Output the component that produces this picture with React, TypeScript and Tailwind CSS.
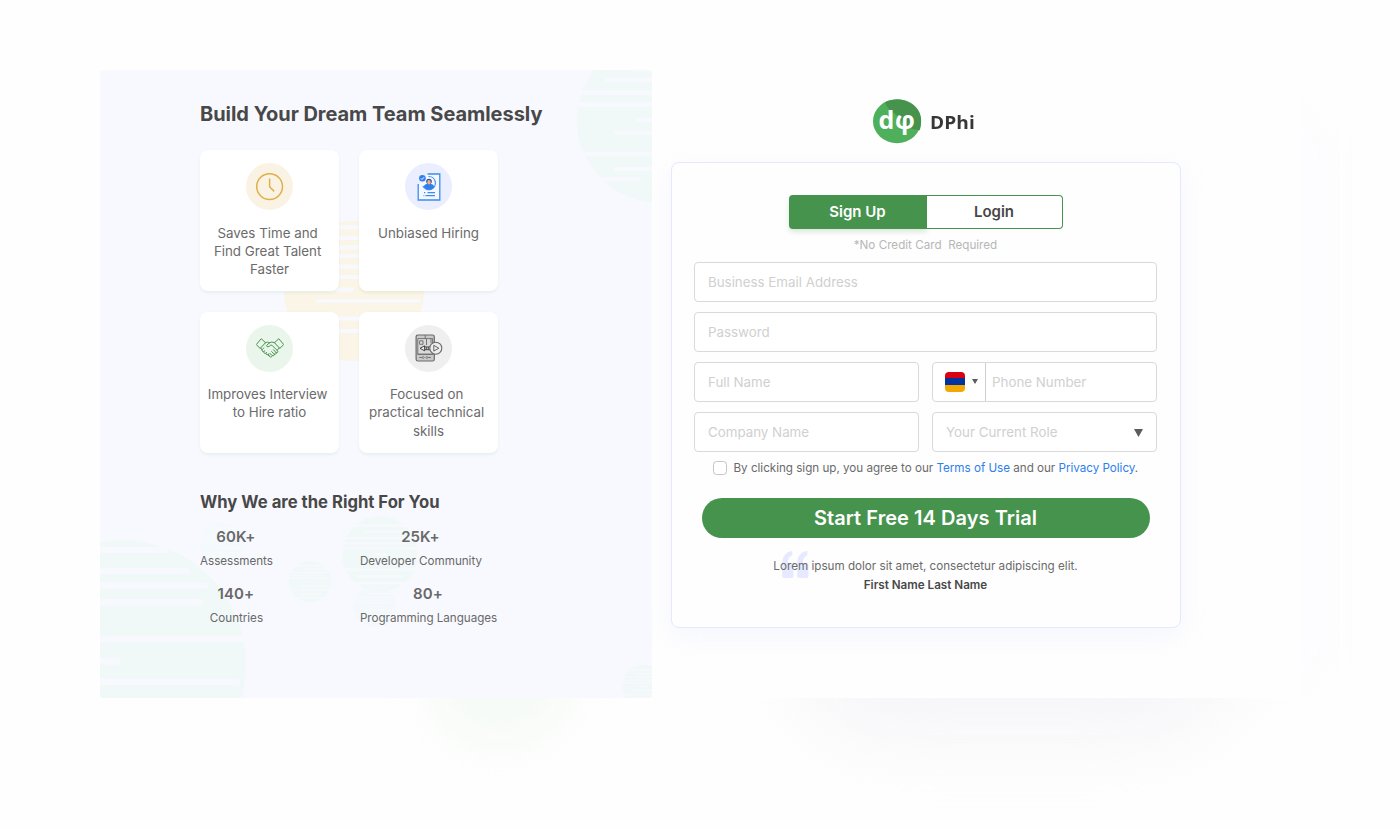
import type { ReactNode } from "react";

type Stripe = { x1: number; x2: number; y: number; h: number };

function StripedCircle({ id, cx, cy, r, fill, stripes }: { id: string; cx: number; cy: number; r: number; fill: string; stripes: Stripe[] }) {
  return (
    <g>
      <mask id={id}>
        <rect x={cx - r} y={cy - r} width={r * 2} height={r * 2} fill="white" />
        {stripes.map((s, i) => (
          <rect key={i} x={s.x1} y={s.y} width={s.x2 - s.x1} height={s.h} rx={s.h / 2} fill="black" />
        ))}
      </mask>
      <circle cx={cx} cy={cy} r={r} fill={fill} mask={`url(#${id})`} />
    </g>
  );
}

const line = (x1: number, x2: number, y: number, h: number): Stripe => ({ x1, x2, y, h });

/* Stripe pattern shared by the small circles, as fractions of the radius. */
const pattern: [number, number, number][] = [
  [-1.1, 1.1, -0.78],
  [-0.4, 1.1, -0.62],
  [-1.1, 1.1, -0.45],
  [-1.1, 0.7, -0.3],
  [-1.1, 1.1, -0.18],
  [-0.2, 0.2, -0.02],
  [-0.5, 0.9, 0.18],
  [-1.1, 1.1, 0.38],
  [-0.6, 0.6, 0.56],
  [-1.1, 1.1, 0.74],
];

function smallStripes(cx: number, cy: number, r: number): Stripe[] {
  return pattern.map(([a, b, y]) => line(cx + a * r, cx + b * r, cy + y * r, r * 0.055));
}

function Decorations() {
  const green = "#f1f8f8";
  const dots: [number, number, number, string][] = [
    [221, 544, 21, "#f4f9fb"],
    [310, 581.5, 21, green],
    [380, 554, 38, green],
    [375, 606, 21, "#f3f9fa"],
    [643, 686, 21, green],
  ];
  return (
    <svg className="absolute inset-0 h-full w-full" viewBox="100 70 552 628">
      <StripedCircle
        id="top-right"
        cx={660}
        cy={120}
        r={83}
        fill={green}
        stripes={[
          line(632, 760, 67.5, 4),
          line(605, 760, 77.5, 4.6),
          line(560, 760, 90.5, 4.6),
          line(560, 760, 102.5, 4.6),
          line(636, 760, 118, 4),
          line(614, 760, 131, 4),
          line(560, 760, 152, 4),
          line(614, 760, 167, 4),
          line(590, 641, 177.3, 4),
        ]}
      />
      <StripedCircle
        id="bottom-left"
        cx={122}
        cy={664}
        r={124}
        fill={green}
        stripes={[
          line(0, 168, 547, 6),
          line(0, 190, 568, 6),
          line(0, 208, 582.5, 6.3),
          line(0, 203, 599, 6.3),
          line(0, 260, 636, 6.3),
          line(0, 120, 658.5, 6.3),
          line(0, 240, 678.7, 6.3),
        ]}
      />
      {dots.map(([cx, cy, r, fill], i) => (
        <StripedCircle key={i} id={`dot-${i}`} cx={cx} cy={cy} r={r} fill={fill} stripes={smallStripes(cx, cy, r)} />
      ))}
      <StripedCircle
        id="yellow"
        cx={354}
        cy={291}
        r={70}
        fill="#fbf5e7"
        stripes={[225.3, 236, 245.3, 254, 264.7, 275]
          .map((y) => line(280, 430, y, 4))
          .concat([line(270, 354, 287.7, 4), line(316, 421, 299, 3.7), line(270, 440, 316.7, 3.8), line(270, 440, 329, 4)])}
      />
    </svg>
  );
}

function ClockIcon() {
  return (
    <svg className="h-[28px] w-[28px]" viewBox="0 0 28 28" fill="none" stroke="#dfb04a" strokeWidth="1.5">
      <circle cx="13.6" cy="13.6" r="12.9" />
      <path d="M13.6 5.6v8.2l4.6 4.6" />
    </svg>
  );
}

function ResumeIcon() {
  return (
    <svg className="h-[28px] w-[28px]" viewBox="0 0 28 28" fill="none">
      <path d="M12.5 1H24.8V27H3.2V11" stroke="#3c8cf0" strokeWidth="1.3" fill="#f5f8ff" />
      <path d="M3.2 1h9.3L3.2 11z" fill="#eaeeff" />
      <path d="M13.5 3.5a6.6 6.6 0 1 1-5.6 9.5" stroke="#3c8cf0" strokeWidth="1.2" />
      <circle cx="7.4" cy="5.2" r="4.4" fill="#eaeeff" />
      <circle cx="7.4" cy="5.2" r="3.3" fill="#2f80ed" />
      <path d="M5.8 5.3l1.2 1.2 2.1-2.3" stroke="#fff" strokeWidth="0.9" />
      <path d="M8.8 14c.3-2.4 2-3.2 5.2-3.2s4.9.8 5.2 3.2c-1.3 1.7-3.1 2.6-5.2 2.6s-4-1-5.2-2.6z" fill="#2f80ed" />
      <circle cx="14" cy="8.6" r="2.8" fill="#31598c" />
      <ellipse cx="14" cy="9.2" rx="1.7" ry="2.2" fill="#f3ae91" />
      <path d="M12.5 19.6h7.5M10.5 22.7h9.5M9 19.6h1.3M8.5 22.7h.8" stroke="#3c8cf0" strokeWidth="1.2" />
    </svg>
  );
}

function HandshakeIcon() {
  return (
    <svg className="h-[28px] w-[28px]" viewBox="0 0 28 28" fill="none" stroke="#46934d" strokeWidth="1" strokeLinejoin="round" strokeLinecap="round">
      <path d="M5.500 5l4 3.700-5.300 5.800L.6 10.800z" />
      <path d="M22.500 5l-4 3.700 5.300 5.800 3.600-3.700z" />
      <path d="M9.300 8.700c1.700-.8 3-.6 4.200 0M18.600 8.700c-2.700-1.100-4.200-.6-5.600.5l-2.600 2.500c.6 1.700 2.500 1.300 4-.4l1.500-.1 5.700 5.700c.8 1.300-.5 2.500-1.700 1.700M4.700 13.900l1.300 2M23.300 13.900l-2.100 2.300" />
      <path d="M17.500 15.800l2.600 2.700c.5 1.500-.8 2.200-1.700 1.500M15.600 17.500l2.700 2.700c.3 1.400-1 2-1.900 1.400M13.800 19.300l2.300 2.300c.1 1.200-1.300 1.900-2.300 1l-1.600-1.500" />
      <path d="M7.900 14.100c-1.200.7-2.200 1.700-1.700 2.900.6 1.100 1.600.6 2.400-.2-1.100 1-.9 2.300.1 2.600.8.200 1.400-.4 1.900-1-.9 1.100-.5 2.300.5 2.400.7 0 1.100-.4 1.600-.9-.6 1-.3 2 .7 2.100" />
    </svg>
  );
}

function DeviceIcon() {
  return (
    <svg className="h-[28px] w-[28px]" viewBox="0 0 28 28" fill="none" stroke="#6a6a6a" strokeWidth="0.9">
      <rect x="1.1" y="1" width="18.2" height="26" rx="1.8" fill="#c9c9c9" strokeWidth="1.2" />
      <path d="M2.8 4.6h14.8v15.6H2.8z" fill="#d9d9d9" />
      <path d="M10.2 1v3.6M4.6 6.8h3.4v3.5H4.6zM11.5 5v6M16 5v4M2.5 20.3h16M4.3 23.5h3.4M12.5 23.5H16M7.7 22l1.5 1.5-1.5 1.5M12.5 22L11 23.5l1.5 1.5" />
      <path d="M5 14.3l4.6-2.5v5z" fill="#eee" stroke="#333" />
      <path d="M9.6 12.9h6v2.8h-6M11.3 13v3M13.3 13v3" stroke="#444" />
      <circle cx="20.8" cy="14.2" r="6" fill="#eee" strokeWidth="1.1" />
      <path d="M18.8 11.3l5 2.9-5 2.9z" stroke="#555" />
    </svg>
  );
}

function Feature({ icon, tint, lines }: { icon: ReactNode; tint: string; lines: string[] }) {
  return (
    <div className="flex h-[141px] w-[139px] flex-col items-center rounded-lg bg-white pt-[13px] shadow-[0_1.5px_3px_rgba(70,147,77,0.09)]">
      <div className={`flex h-[47px] w-[47px] items-center justify-center rounded-full ${tint}`}>{icon}</div>
      <div className="mt-[13.5px] flex flex-col items-center text-[13.33px] leading-[18.4px] whitespace-pre text-[#6b6b6b]">
        {lines.map((l) => (
          <span key={l}>{l}</span>
        ))}
      </div>
    </div>
  );
}

function Stat({ value, label }: { value: string; label: string }) {
  return (
    <div className="flex h-[57px] flex-col items-center">
      <span className="pr-px text-[15px] leading-[18px] font-semibold tracking-[0.1px] text-[#696969]">{value}</span>
      <span className="mt-[7px] text-[11.67px] leading-[16px] tracking-[-0.03px] whitespace-nowrap text-[#696969]">{label}</span>
    </div>
  );
}

function Logo() {
  return (
    <svg className="h-[46px] w-[50px]" viewBox="872 98 50 46">
      <ellipse cx="897" cy="121.2" rx="24" ry="22" fill="#4fb05c" />
      <path d="M885 102.2C901 94.5 923 104 921 122.5C920.9 125.5 920.5 128 919.7 130.3C914 129.500 906 128 902 122C897 113 891 112 888.5 108.5C887 106.5 886 104.5 885 102.2z" fill="#46934d" />
      <text x="878.5" y="129" fontFamily="Open Sans, Noto Sans, sans-serif" fontWeight="700" fontSize="25" letterSpacing="0.8" fill="#fff">
        dφ
      </text>
    </svg>
  );
}

function Field({ children }: { children: string }) {
  return (
    <div className="flex h-10 items-center rounded-[4px] border border-[#d9d9d9] bg-white pt-0.5 pl-[13px] text-[13.33px] text-[#d0d0d0]">{children}</div>
  );
}

export default function App() {
  return (
    <div className="relative h-[829px] w-[1400px] overflow-hidden bg-[#fefefe] pt-[70px] pl-[100px] font-['Inter',sans-serif]">
      <div className="absolute top-[590px] left-[430px] h-[155px] w-[140px] rounded-full bg-[#f5faf5] blur-[26px]" />
      <div className="absolute top-[560px] left-[800px] h-[175px] w-[430px] rounded-full bg-[#f5f5f8] blur-[36px]" />
      <div className="absolute top-[120px] left-[1240px] h-[560px] w-[80px] bg-[#fcfcff] blur-[24px]" />

      <main className="relative flex h-[628px] w-[1200px] bg-[#fefefe]">
        <section className="relative w-[552px] shrink-0 overflow-hidden rounded-[3px] bg-[#f8f9ff]">
          <Decorations />
          <div className="relative pt-[30px] pl-[100px]">
            <h1 className="text-[20px] leading-[28px] font-bold tracking-[-0.04px] whitespace-nowrap text-[#484848]">Build Your Dream Team Seamlessly</h1>
            <div className="mt-[22px] grid grid-cols-[139px_139px] gap-x-5 gap-y-[20.5px]">
              <Feature icon={<ClockIcon />} tint="bg-[#faf3e4]" lines={["Saves Time and ", "Find Great Talent ", "Faster"]} />
              <Feature icon={<ResumeIcon />} tint="bg-[#eaeeff]" lines={["Unbiased Hiring"]} />
              <Feature icon={<HandshakeIcon />} tint="bg-[#eaf5eb]" lines={["Improves Interview ", "to Hire ratio"]} />
              <Feature icon={<DeviceIcon />} tint="bg-[#efefef]" lines={["Focused on ", "practical technical ", "skills"]} />
            </div>
            <h2 className="mt-[37px] text-[16.67px] leading-[24px] font-bold whitespace-nowrap text-[#484848]">Why We are the Right For You</h2>
            <div className="mt-[14px] flex gap-[87px]">
              <div>
                <Stat value="60K+" label="Assessments" />
                <Stat value="140+" label="Countries" />
              </div>
              <div>
                <div className="w-fit">
                  <Stat value="25K+" label="Developer Community" />
                </div>
                <Stat value="80+" label="Programming Languages" />
              </div>
            </div>
          </div>
        </section>

        <section className="flex flex-col pt-[28px] pl-[19px]">
          <div className="flex h-[46px] items-center pl-[201px]">
            <Logo />
            <span className="mt-[4px] ml-[8px] origin-left scale-x-[1.09] font-['Open_Sans','Noto_Sans',sans-serif] text-[17.5px] leading-none font-bold tracking-[0.1px] text-[#373737]">DPhi</span>
          </div>

          <div className="mt-[18px] flex h-[466px] w-[510px] flex-col rounded-lg border border-[#e6e8ff] bg-[#fefefe] pr-[23px] pl-[22px] shadow-[0_8px_28px_rgba(225,227,255,0.3)]">
            <div className="mt-[32px] flex h-[34px] w-[274px] self-center text-[15px] font-semibold">
              <button className="w-[138px] rounded-l-[4px] bg-[#46934d] text-white shadow-[0_3px_5px_rgba(70,147,77,0.2)]">Sign Up</button>
              <button className="flex-1 rounded-r-[4px] border border-l-0 border-[#46934d] bg-white text-[#484848]">Login</button>
            </div>
            <p className="mt-[8px] text-center text-[11.67px] leading-[16px] whitespace-pre text-[#b7b7b7]">*No Credit Card  Required</p>

            <div className="mt-[8.5px] grid grid-cols-2 gap-x-[13px] gap-y-[10px]">
              <div className="col-span-2">
                <Field>Business Email Address</Field>
              </div>
              <div className="col-span-2">
                <Field>Password</Field>
              </div>
              <Field>Full Name</Field>
              <div className="flex h-10 items-center rounded-[4px] border border-[#d9d9d9] bg-white text-[13.33px] text-[#d0d0d0]">
                <div className="flex h-full w-[53px] shrink-0 items-center border-r border-[#cfcfcf] pl-[12px]">
                  <span className="flex h-[20px] w-[20px] flex-col overflow-hidden rounded-[4px]">
                    <span className="flex-1 bg-[#d90012]" />
                    <span className="flex-1 bg-[#0033a0]" />
                    <span className="flex-1 bg-[#f2a800]" />
                  </span>
                  <svg className="ml-[7px] h-[5px] w-[6px]" viewBox="0 0 6 5">
                    <path d="M0 0h6L3 5z" fill="#5c5c5c" />
                  </svg>
                </div>
                <span className="mt-0.5 ml-[6px]">Phone Number</span>
              </div>
              <Field>Company Name</Field>
              <div className="flex h-10 items-center justify-between rounded-[4px] border border-[#d9d9d9] bg-white pt-0.5 pr-[13px] pl-[13px] text-[13.33px] text-[#d0d0d0]">
                Your Current Role
                <svg className="h-[8px] w-[9px]" viewBox="0 0 9 8">
                  <path d="M0 0h9L4.5 8z" fill="#5c5c5c" />
                </svg>
              </div>
            </div>

            <div className="mt-[8.5px] flex h-[16px] items-center pl-[19px] text-[11.67px] tracking-[-0.02px] whitespace-nowrap text-[#6b6b6b]">
              <span className="mr-[6.5px] h-[14px] w-[14px] shrink-0 rounded-[3.5px] border border-[#c4c4c4] bg-white" />
              <span className="pt-0.5">
                By clicking sign up, you agree to our <a className="text-[#2f80ed]">Terms of Use</a> and our <a className="text-[#2f80ed]">Privacy Policy</a>.
              </span>
            </div>

            <button className="mt-[22px] h-10 w-[448px] self-center rounded-full bg-[#46934d] text-[20px] leading-[40px] font-semibold tracking-[0.05px] text-white">Start Free 14 Days Trial</button>

            <div className="relative mt-[20px] text-center text-[11.67px] leading-[16px]">
              <svg className="absolute top-[-7px] left-[88px] h-[27px] w-[27px]" viewBox="0 0 27 27">
                <path id="quote-mark" d="M10.3 0v4.2C7.5 5 5.8 7.8 5.7 12H9.5Q11.5 12 11.5 14V25Q11.5 27 9.5 27H2.2Q.2 27 .2 25V13C.2 5.6 3.8.9 10.3 0z" fill="#e6e9ff" />
                <use href="#quote-mark" x="15" />
              </svg>
              <p className="relative text-[#6b6b6b]">Lorem ipsum dolor sit amet, consectetur adipiscing elit.</p>
              <p className="relative mt-[3px] font-semibold text-[#484848]">First Name Last Name</p>
            </div>
          </div>
        </section>
      </main>
    </div>
  );
}
